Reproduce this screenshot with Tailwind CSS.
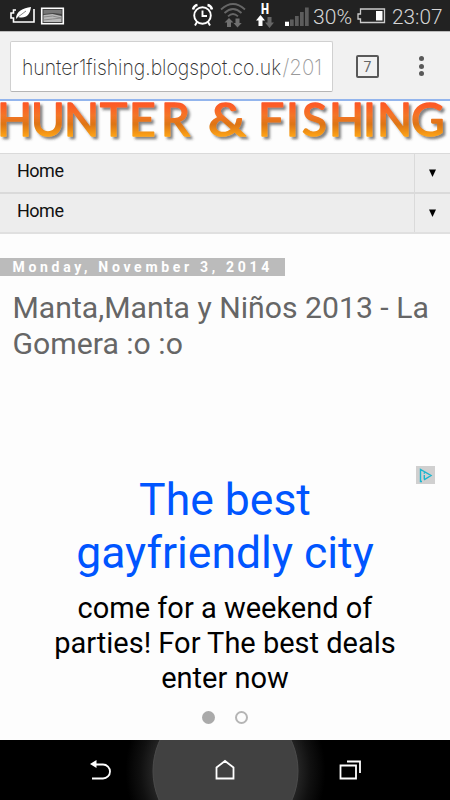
<!DOCTYPE html>
<html lang="en">
<head>
<meta charset="utf-8">
<title>Hunter &amp; Fishing</title>
<script src="https://cdn.jsdelivr.net/npm/@tailwindcss/browser@4"></script>
</head>
<body class="w-[450px] h-[800px] overflow-hidden bg-[#fdfdfd] font-['Roboto',sans-serif] flex flex-col">
<!-- Status bar -->
<header class="h-[31px] shrink-0 bg-[#222]">
<svg width="450" height="31" viewBox="0 0 450 31">
  <path d="M16 10h-2.500v3h-2.500v5h2.500v4H34V9" fill="none" stroke="#fff" stroke-width="1.600"/>
  <path d="M16 19c0-8 7-11 15-12-1 8-5 12-13 10l-3 3z" fill="#fff"/><path d="M18 17l8-6" stroke="#555" stroke-width=".7"/>
  <path d="M41.700 8.200h21.600v15.600H41.700z" fill="#444" stroke="#fff" stroke-width="1.600"/>
  <path d="M43.500 10h18v4l-8-1-10 1z" fill="#777"/><path d="M43.500 15l9-1 9 2v6h-18z" fill="#b9b9b9"/><path d="M43.500 17l9-1 9 2M43.500 20l9-1 9-1" fill="none" stroke="#888"/>
  <g fill="none" stroke="#fff" stroke-width="1.900"><circle cx="202.500" cy="15.500" r="8.300"/><path d="M202.500 10.500v5.500h4.500M197 22l-2 3.500M208 22l2 3.500"/><path d="M193 9.500q1-4 4.500-4.500M212 9.500q-1-4-4.500-4.500" stroke-width="2.500"/></g>
  <g fill="none" stroke="#666" stroke-width="1.800"><path d="M221 9.500q12-11 24 0M224.500 13q8.500-8 17 0M228 16.300q5-4.500 10 0"/></g>
  <path d="M229 18l4.500 4.500H231V27h-4v-4.500h-2.500zM237.500 27.500l-4-4.500h2V18.500h4V23h2.200z" fill="#707070"/>
  <text x="261" y="13.500" font-size="14" font-weight="900" fill="#fff" textLength="8" lengthAdjust="spacingAndGlyphs">H</text>
  <path d="M260.500 15l4.500 5.500h-2.500v5.500h-4v-5.500H256z" fill="#fff"/><path d="M269.500 28l-4.500-5.500h2.500V17h4v5.500h2.500z" fill="#666"/>
  <path d="M285 21.700h4v4.300h-4z" fill="#fff"/><path d="M290 19.500h3.700V26H290zM295 16h3.700v10H295zM300 12h3.700v14H300zM305 7.500h3.700V26H305z" fill="#5c5c5c"/>
  <g font-family="Roboto,sans-serif" font-weight="300" font-size="20.500" fill="#d5d5d5"><text x="313" y="23.500" textLength="39" lengthAdjust="spacingAndGlyphs">30%</text><text x="392" y="23.500" textLength="50.500" lengthAdjust="spacingAndGlyphs">23:07</text></g>
  <path d="M360.500 9h24v13.500h-24v-3.500h-2.500v-5h2.500z" fill="none" stroke="#ccc" stroke-width="1.300"/><path d="M376 11h6.500v9.500H376z" fill="#fff"/>
</svg>
</header>
<!-- Browser toolbar -->
<div class="h-[70px] shrink-0 bg-[#f1f1f1] border-t border-[#bbb] border-b-2 border-b-[#93b5ed] flex items-start">
  <div class="ml-[10px] mt-[9px] w-[323px] h-[51px] bg-white border border-[#d0d0d0] border-b-[#b5b5b5] rounded-[2px]">
    <svg width="321" height="49" viewBox="0 0 321 49" font-family="Inter,Roboto,sans-serif" font-weight="200" font-size="22"><text x="11" y="33" fill="#333" textLength="259" lengthAdjust="spacingAndGlyphs">hunter1fishing.blogspot.co.uk</text><text x="271.500" y="33" fill="#999" textLength="39.500" lengthAdjust="spacingAndGlyphs">/201</text></svg>
  </div>
  <div class="ml-[23px] mt-[23px] w-[23px] h-[23px] border-2 border-[#595959] rounded-[2px] flex items-center justify-center text-[14px] leading-none text-[#666]">7</div>
  <div class="ml-[40px] mt-[24px] w-[5px] flex flex-col gap-[2.500px]">
    <i class="w-[5px] h-[5px] rounded-full bg-[#595959]"></i><i class="w-[5px] h-[5px] rounded-full bg-[#595959]"></i><i class="w-[5px] h-[5px] rounded-full bg-[#595959]"></i>
  </div>
</div>
<!-- Banner -->
<h1 class="h-[52px] shrink-0">
<svg width="450" height="52" viewBox="0 0 450 52">
  <defs><linearGradient id="fire" gradientUnits="userSpaceOnUse" x1="0" y1="0" x2="0" y2="36"><stop offset="0" stop-color="#ff5228"/><stop offset=".4" stop-color="#f47527"/><stop offset=".65" stop-color="#dd7515"/><stop offset="1" stop-color="#ffa616"/></linearGradient>
  <filter id="shade" x="-5%" y="-10%" width="110%" height="140%"><feDropShadow dx="2.500" dy="2.500" stdDeviation="1.300" flood-color="#333" flood-opacity=".6"/></filter></defs>
  <g font-family="Lato,sans-serif" font-weight="400" font-size="46" fill="url(#fire)" stroke="url(#fire)" stroke-width="1.600" stroke-linejoin="round" filter="url(#shade)">
    <text x="-3 31 64 100 129 161" y="35">HUNTER</text>
    <text x="208" y="35" textLength="38" lengthAdjust="spacingAndGlyphs">&amp;</text>
    <text x="258 286 302 329 363 377 411" y="35">FISHING</text>
  </g>
</svg>
</h1>
<!-- Page menus -->
<nav class="shrink-0 text-[18px] tracking-[-0.500px] leading-[20px] text-[#111]">
  <div class="h-[40px] flex bg-[#ededed] border-y border-[#dadada]"><div class="flex-1 pl-[17px] pt-[7px]">Home</div><div class="w-[36px] border-l border-[#dadada] flex items-center justify-center"><svg width="8" height="8"><path d="M0 .500h7L3.500 8z"/></svg></div></div>
  <div class="h-[41px] flex bg-[#ededed] border-t border-b-2 border-t-[#dadada] border-b-[#e0e0e0]"><div class="flex-1 pl-[17px] pt-[7px]">Home</div><div class="w-[36px] border-l border-[#dadada] flex items-center justify-center"><svg width="8" height="8"><path d="M0 .500h7L3.500 8z"/></svg></div></div>
</nav>
<!-- Post -->
<main class="flex-1 min-h-0">
  <div class="mt-[24px] w-[285px] h-[18px] bg-[#bbb] pl-[12.500px] text-[14px] leading-[18px] font-bold text-white tracking-[3.700px] whitespace-nowrap">Monday, November 3, 2014</div>
  <h2 class="mt-[14px] pl-[12.500px] text-[30.200px] leading-[36px] text-[#666] whitespace-nowrap">Manta,Manta y Niños 2013 - La<br>Gomera :o :o</h2>
  <div class="mt-[104px] flex justify-end pr-[15px]"><svg width="19" height="18" viewBox="0 0 19 18"><path d="M0 0h19v18H0z" fill="#d0d0d0"/><path d="M6 15.500H4.500V3.500l10.500 6-6.500 4H8M8.300 9v4.500M8.300 6.500v1.300" fill="none" stroke="#1bb6cf" stroke-width="1.400"/></svg></div>
  <div class="-mt-[10px] text-center text-[44.500px] leading-[53px] text-[#0055ff]">The best<br>gayfriendly city</div>
  <p class="mt-[11px] text-center text-[29px] leading-[35px] text-black whitespace-nowrap">come for a weekend of<br>parties! For The best deals<br>enter now</p>
  <div class="mt-[15px] flex justify-center gap-[20px]"><i class="w-[13px] h-[13px] rounded-full bg-[#aaa]"></i><i class="w-[13px] h-[13px] rounded-full border-2 border-[#b5b5b5]"></i></div>
</main>
<!-- Navigation keys -->
<footer class="h-[60px] shrink-0 bg-black">
<svg width="450" height="60" viewBox="0 0 450 60">
  <defs><radialGradient id="glow" gradientUnits="userSpaceOnUse" cx="225.500" cy="31" r="100"><stop offset=".7" stop-color="#282828"/><stop offset=".85" stop-color="#101010"/><stop offset="1" stop-color="#000"/></radialGradient></defs>
  <path d="M125 0h200v60H125z" fill="url(#glow)"/><circle cx="225.500" cy="31" r="72.500" fill="#414141" stroke="#4b4b4b"/>
  <g fill="none" stroke="#fff" stroke-width="1.800"><path d="M94 24.500h9a7 7 0 0 1 0 14H92M216.500 38.500V27.500l8.500-6.500 8.500 6.500v11zM340.500 25.500H356v13h-15.500zM347 21.500h13V33"/></g><path d="M90 24l6.500-4v8z" fill="#fff"/>
</svg>
</footer>
</body>
</html>
